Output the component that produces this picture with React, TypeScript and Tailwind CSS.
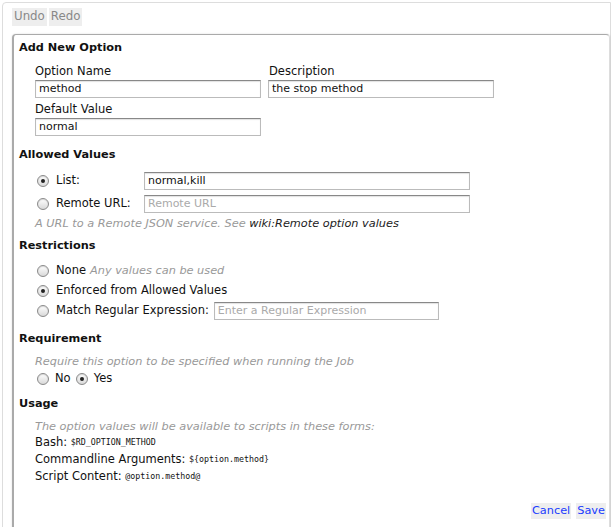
function Radio({ checked = false }: { checked?: boolean }) {
  return (
    <span className="inline-flex h-[12px] w-[12px] shrink-0 items-center justify-center rounded-full border border-[#8a8a8a] bg-gradient-to-b from-[#ffffff] to-[#d9d9d9] shadow-[inset_0_1px_1px_rgba(0,0,0,0.15)]">
      {checked && <span className="h-[4px] w-[4px] rounded-full bg-[#222]" />}
    </span>
  );
}

function TextInput({ value, placeholder, w }: { value?: string; placeholder?: string; w: string }) {
  return (
    <div
      className={`flex h-[18px] shrink-0 items-center border border-[#bbb] border-t-[#888] px-[3px] text-[11px] shadow-[inset_0_1px_1px_rgba(0,0,0,0.12)] ${w}`}
    >
      {value ? <span className="text-[#111]">{value}</span> : <span className="text-[#aaa]">{placeholder}</span>}
    </div>
  );
}

function Heading({ children, mt }: { children: React.ReactNode; mt: string }) {
  return <div className={`flex h-[16px] items-center text-[11.3px] font-bold text-[#111] ${mt}`}>{children}</div>;
}

function Help({ children }: { children: React.ReactNode }) {
  return <span className="text-[11.3px] italic text-[#999]">{children}</span>;
}

export default function App() {
  return (
    <div className="h-[527px] w-[611px] overflow-hidden bg-white pl-[2px] pt-[2px] font-['DejaVu_Sans',sans-serif] text-[11.5px] text-[#111]">
      <div className="h-[560px] rounded-tl-[4px] border border-[#ddd] pl-[9px] pt-[5px]">
        <div className="flex h-[18px] gap-[2px]">
          <span className="flex items-center bg-[#eee] px-[2px] text-[11.8px] text-[#888]">Undo</span>
          <span className="flex items-center bg-[#eee] px-[2px] text-[11.8px] text-[#888]">Redo</span>
        </div>

        <div className="mt-[8px] h-[520px] rounded-t-[4px] border border-l-2 border-[#aaa] border-r-[#ddd] pl-[5px] pt-[5px] shadow-[0_0_2px_rgba(0,0,0,0.15)]">
          <Heading mt="mt-0">Add New Option</Heading>

          <div className="grid w-[460px] grid-cols-[231px_1fr] gap-x-[2px] pl-[16px]">
            <div className="mt-[8px] flex h-[16px] items-center">Option Name</div>
            <div className="mt-[8px] flex h-[16px] items-center pl-[1px]">Description</div>
            <div>
              <TextInput value="method" w="w-[226px]" />
            </div>
            <div>
              <TextInput value="the stop method" w="w-[226px]" />
            </div>
            <div className="mt-[4px] flex h-[16px] items-center">Default Value</div>
            <div />
            <div>
              <TextInput value="normal" w="w-[226px]" />
            </div>
          </div>

          <Heading mt="mt-[11px]">Allowed Values</Heading>
          <div className="pl-[18px]">
            <div className="mt-[9px] flex items-center">
              <Radio checked />
              <span className="ml-[7px] w-[88px]">List:</span>
              <TextInput value="normal,kill" w="w-[326px]" />
            </div>
            <div className="mt-[5px] flex items-center">
              <Radio />
              <span className="ml-[7px] w-[88px]">Remote URL:</span>
              <TextInput placeholder="Remote URL" w="w-[326px]" />
            </div>
          </div>
          <div className="mt-[3px] flex h-[16px] items-center pl-[16px]">
            <Help>
              A URL to a Remote JSON service. See <span className="text-[#222]">wiki:Remote option values</span>
            </Help>
          </div>

          <Heading mt="mt-[6px]">Restrictions</Heading>
          <div className="pl-[18px]">
            <div className="mt-[9px] flex h-[16px] items-center">
              <Radio />
              <span className="ml-[7px]">None</span>
              <span className="ml-[4px]">
                <Help>Any values can be used</Help>
              </span>
            </div>
            <div className="mt-[4px] flex h-[16px] items-center">
              <Radio checked />
              <span className="ml-[7px]">Enforced from Allowed Values</span>
            </div>
            <div className="mt-[3px] flex items-center">
              <Radio />
              <span className="ml-[7px] mr-[5px]">Match Regular Expression:</span>
              <TextInput placeholder="Enter a Regular Expression" w="w-[225px]" />
            </div>
          </div>

          <Heading mt="mt-[11px]">Requirement</Heading>
          <div className="pl-[16px]">
            <div className="mt-[7px] flex h-[16px] items-center">
              <Help>Require this option to be specified when running the Job</Help>
            </div>
            <div className="mt-[1px] flex h-[16px] items-center pl-[2px]">
              <Radio />
              <span className="ml-[6px]">No</span>
              <span className="ml-[5px] flex items-center">
                <Radio checked />
              </span>
              <span className="ml-[6px]">Yes</span>
            </div>
          </div>

          <Heading mt="mt-[9px]">Usage</Heading>
          <div className="pl-[16px]">
            <div className="mt-[7px] flex h-[16px] items-center">
              <Help>The option values will be available to scripts in these forms:</Help>
            </div>
            <div className="flex h-[15px] items-center">
              Bash:&nbsp;<code className="font-['DejaVu_Sans_Mono',monospace] text-[8.3px]">$RD_OPTION_METHOD</code>
            </div>
            <div className="mt-[2px] flex h-[15px] items-center">
              Commandline Arguments:&nbsp;
              <code className="font-['DejaVu_Sans_Mono',monospace] text-[8.3px]">{"${option.method}"}</code>
            </div>
            <div className="mt-[2px] flex h-[15px] items-center">
              Script Content:&nbsp;<code className="font-['DejaVu_Sans_Mono',monospace] text-[8.3px]">@option.method@</code>
            </div>
          </div>

          <div className="mt-[19px] flex h-[16px] justify-end gap-[5px] pr-[3px] text-[11.3px]">
            <span className="flex items-center bg-[#eee] px-[1px] text-[#1a3cff]">Cancel</span>
            <span className="flex items-center bg-[#eee] px-[1px] text-[#1a3cff]">Save</span>
          </div>
        </div>
      </div>
    </div>
  );
}
